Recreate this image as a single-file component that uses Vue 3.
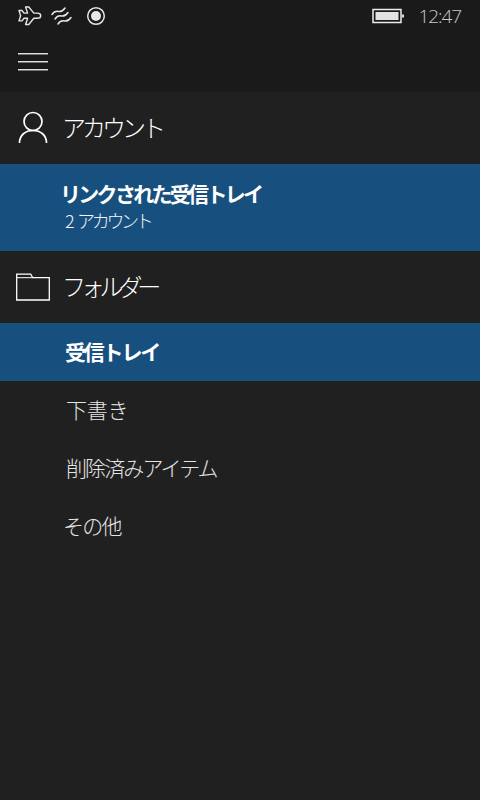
<template>
  <div class="phone">
    <header class="top">
      <div class="status">
        <div class="status__left">
          <!-- airplane mode -->
          <svg class="ic-plane" width="24" height="20" viewBox="0 0 24 20" fill="none" stroke="currentColor" stroke-width="1.4" stroke-linejoin="round">
            <path d="M1 4.500h3l2 2.600h3.600L7.600 1h3.200l5 6.100h3.600c2 0 3.300 1.200 3.300 2.600s-1.300 2.600-3.300 2.600h-3.600l-5 6.200H7.600l2-6.200H6l-2 2.600H1l1.600-5.200z" />
          </svg>
          <!-- waves -->
          <svg class="ic-waves" width="22" height="20" viewBox="0 0 22 20" fill="none" stroke="currentColor" stroke-width="1.500" stroke-linecap="round">
            <path d="M1 8.500c2-3 4-3.500 6.500-3 2.500.4 4 0 6.500-3.500" />
            <path d="M4 13c2-3 4-3.500 6.500-3 2.500.4 4 0 6.500-3.500" />
            <path d="M7 18c2-3 4-3.500 6.500-3 2.500.4 4 0 6.500-3.500" />
          </svg>
          <svg class="ic-rec" width="20" height="20" viewBox="0 0 20 20">
            <circle cx="10" cy="10" r="8.300" fill="none" stroke="currentColor" stroke-width="1.500" />
            <circle cx="10" cy="10" r="5" fill="currentColor" />
          </svg>
        </div>
        <div class="status__right">
          <svg class="ic-batt" width="32" height="16" viewBox="0 0 32 16">
            <rect x="1" y="1.500" width="28" height="13" fill="none" stroke="#eee" stroke-width="1.500" />
            <rect x="3.500" y="4" width="23" height="8" fill="#e2e2e2" />
            <rect x="30" y="6.500" width="2" height="3" fill="#ddd" />
          </svg>
          <span class="clock">12:47</span>
        </div>
      </div>
      <div class="bar">
        <button class="burger" type="button" aria-label="menu">
          <span></span><span></span><span></span>
        </button>
      </div>
    </header>

    <main class="menu">
      <div class="heading">
        <span class="heading__icon">
          <svg width="30" height="34" viewBox="0 0 30 34" fill="none" stroke="#fff" stroke-width="1.700">
            <circle cx="15" cy="10.500" r="9" />
            <path d="M1.500 32c0-8 6-12.500 13.500-12.500S28.500 24 28.500 32" />
          </svg>
        </span>
        <span class="heading__text">アカウント</span>
      </div>
      <div class="item item--linked">
        <span class="item__title">リンクされた受信トレイ</span>
        <span class="item__sub">2 アカウント</span>
      </div>

      <div class="heading">
        <span class="heading__icon">
          <svg width="34" height="28" viewBox="0 0 34 28" fill="none" stroke="#fff" stroke-width="1.300">
            <path d="M.700 27V1.200h14l2 3.500H33.300V27z" />
            <path d="M.700 4.700h16" stroke-width="1" />
          </svg>
        </span>
        <span class="heading__text heading__text--folder">フォルダー</span>
      </div>
      <div
        v-for="f in folders"
        :key="f.name"
        :class="['item', 'item--row', f.mod]"
      >
        <span class="item__name">{{ f.name }}</span>
      </div>
    </main>
  </div>
</template>

<script setup>
const folders = [
  { name: '受信トレイ', mod: 'item--active' },
  { name: '下書き', mod: 'item--drafts' },
  { name: '削除済みアイテム', mod: 'item--deleted' },
  { name: 'その他', mod: 'item--other' }
]
</script>

<style>
html, body { background: #202020; }
</style>

<style scoped>
.phone {
  width: 480px;
  height: 800px;
  overflow: hidden;
  background: #202020;
  color: #fff;
  font-family: "Noto Sans CJK JP", "Noto Sans", sans-serif;
}
.top { background: #1a1a1a; height: 92px; }
.status {
  height: 32px;
  display: flex;
  justify-content: space-between;
  align-items: center;
  color: #e6e6e6;
}
.status__left {
  display: flex;
  align-items: center;
  padding-left: 18px;
  gap: 9px;
}
.ic-rec { margin-left: 4px; }
.status__right {
  display: flex;
  align-items: center;
  gap: 15px;
  padding-right: 19px;
}
.clock {
  font-family: "Open Sans", sans-serif;
  font-weight: 300;
  font-size: 19px;
  letter-spacing: -1.100px;
  color: #c9c9c9;
}
.bar { height: 60px; display: flex; align-items: center; padding-left: 18px; }
.burger {
  display: flex;
  flex-direction: column;
  gap: 6px;
  width: 30px;
  padding: 0;
  border: none;
  background: none;
}
.burger span { display: block; height: 1px; background: #dcdcdc; border-bottom: 1px solid #777; }
.heading {
  height: 72px;
  display: flex;
  align-items: center;
}
.heading__icon {
  width: 62px;
  padding-left: 16px;
  box-sizing: border-box;
  display: flex;
}
.heading:first-child .heading__icon { padding-left: 18px; }
.heading__text {
  font-size: 24px;
  font-weight: 300;
  letter-spacing: -4px;
  line-height: 1;
  padding-bottom: 2px;
}
.heading__text--folder { letter-spacing: -5.200px; }
.item { background: #17507f; display: flex; flex-direction: column; justify-content: center; padding-left: 60px; }
.item--linked { height: 87px; padding-bottom: 3px; box-sizing: border-box; }
.item__title { font-size: 21px; font-weight: 700; letter-spacing: -2.700px; line-height: 28px; }
.item__sub { font-size: 18px; font-weight: 300; letter-spacing: -3.300px; word-spacing: 5px; line-height: 26px; padding-left: 5px; color: #f0f4f8; }
.item--row { background: none; height: 58px; padding-left: 66px; padding-bottom: 2px; box-sizing: border-box; }
.item--active { background: #17507f; padding-left: 65px; }
.item__name { font-size: 21px; font-weight: 300; color: #e4e4e4; }
.item--active .item__name { font-weight: 700; letter-spacing: -2.200px; color: #fff; }
.item--drafts .item__name { letter-spacing: -.200px; }
.item--deleted .item__name { letter-spacing: -1.900px; }
.item--other { padding-left: 63px; }
.item--other .item__name { letter-spacing: -1.700px; }
</style>
